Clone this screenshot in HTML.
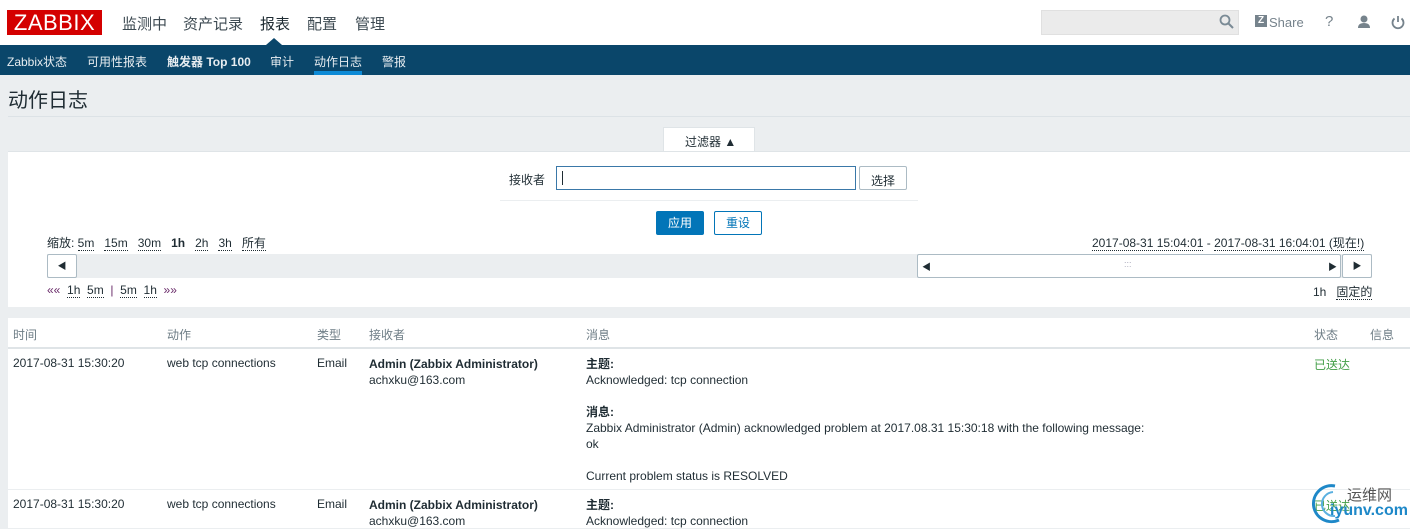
<!DOCTYPE html>
<html><head><meta charset="utf-8"><style>
*{margin:0;padding:0;box-sizing:border-box}
body{width:1410px;height:528px;overflow:hidden;background:#ebeef0;font-family:"Liberation Sans","Noto Sans CJK SC",sans-serif;font-size:12px;color:#1f2c33;position:relative}
.a{position:absolute;white-space:nowrap}
.u{border-bottom:1px dotted #1f2c33}
.top{position:absolute;left:0;top:0;width:1410px;height:45px;background:#fff}
.nav{position:absolute;left:0;top:45px;width:1410px;height:30px;background:#0a466a}
.nav span{position:absolute;top:8px;color:#fff;font-size:12px;opacity:.9}
.m{font-size:15px;color:#3d4a52;top:13px}
.btn{position:absolute;border:1px solid #acbbc4;background:#fff;border-radius:2px}
</style></head><body>
<div class="top"></div>
<div class="a" style="left:7px;top:10px;width:95px;height:25px;background:#d40000;color:#fff;font-size:22px;line-height:25px;text-align:center;letter-spacing:0.5px">ZABBIX</div>
<div class="a m" style="left:122px">监测中</div>
<div class="a m" style="left:183px">资产记录</div>
<div class="a m" style="left:260px;color:#1f2c33">报表</div>
<div class="a m" style="left:307px">配置</div>
<div class="a m" style="left:355px">管理</div>
<div class="a" style="left:266px;top:38px;width:0;height:0;border-left:8px solid transparent;border-right:8px solid transparent;border-bottom:7px solid #0a466a"></div>
<div class="a" style="left:1041px;top:10px;width:198px;height:25px;background:#ebebeb;border:1px solid #e0e0e0"></div>
<svg class="a" style="left:1219px;top:14px" width="16" height="16"><circle cx="6" cy="6" r="4.5" fill="none" stroke="#7a8a95" stroke-width="1.8"/><path d="M9.5 9.5L14 14" stroke="#7a8a95" stroke-width="2"/></svg>
<div class="a" style="left:1255px;top:15px;width:12px;height:12px;background:#76838c;color:#fff;font-size:10px;font-weight:bold;line-height:12px;text-align:center">Z</div>
<div class="a" style="left:1269px;top:15px;color:#76838c;font-size:13px">Share</div>
<div class="a" style="left:1325px;top:13px;color:#76838c;font-size:15px">?</div>
<svg class="a" style="left:1356px;top:14px" width="16" height="16"><circle cx="8" cy="5" r="3.5" fill="#76838c"/><path d="M2 14Q2 9 8 9Q14 9 14 14Z" fill="#76838c"/></svg>
<svg class="a" style="left:1390px;top:14px" width="16" height="16"><path d="M4.5 4.5A5.5 5.5 0 1 0 11.5 4.5" fill="none" stroke="#76838c" stroke-width="1.8"/><path d="M8 2V8" stroke="#76838c" stroke-width="1.8"/></svg>
<div class="nav">
<span style="left:7px">Zabbix状态</span><span style="left:87px">可用性报表</span><span style="left:167px;font-weight:bold">触发器 Top 100</span><span style="left:270px">审计</span><span style="left:314px">动作日志</span><span style="left:382px">警报</span>
<div class="a" style="left:314px;top:26px;width:48px;height:4px;background:#0d8ad6"></div>
</div>
<div class="a" style="left:8px;top:84px;font-size:20px;color:#1f2c33">动作日志</div>
<div class="a" style="left:8px;top:116px;width:1402px;height:1px;background:#dce2e6"></div>
<div class="a" style="left:663px;top:127px;width:92px;height:25px;background:#fff;border:1px solid #dfe4e7;border-bottom:none"></div>
<div class="a" style="left:685px;top:133px">过滤器 ▲</div>
<div class="a" style="left:8px;top:151px;width:1402px;height:156px;background:#fff;border-top:1px solid #dfe4e7"></div>
<div class="a" style="left:509px;top:171px">接收者</div>
<div class="a" style="left:556px;top:166px;width:300px;height:24px;border:1px solid #3a78a8"></div>
<div class="a" style="left:562px;top:171px;width:1px;height:14px;background:#1f2c33"></div>
<div class="btn" style="left:859px;top:166px;width:48px;height:24px"></div>
<div class="a" style="left:871px;top:172px">选择</div>
<div class="a" style="left:500px;top:200px;width:418px;height:1px;background:#ebeef0"></div>
<div class="a" style="left:656px;top:211px;width:48px;height:24px;background:#0275b8;border-radius:2px;color:#fff;text-align:center;line-height:24px">应用</div>
<div class="a" style="left:714px;top:211px;width:48px;height:24px;border:1px solid #0275b8;border-radius:2px;color:#0275b8;text-align:center;line-height:22px">重设</div>
<div class="a" style="left:47px;top:234px">缩放: <span class="u">5m</span>&nbsp;&nbsp; <span class="u">15m</span>&nbsp;&nbsp; <span class="u">30m</span>&nbsp;&nbsp; <b>1h</b>&nbsp;&nbsp; <span class="u">2h</span>&nbsp;&nbsp; <span class="u">3h</span>&nbsp;&nbsp; <span class="u">所有</span></div>
<div class="a" style="left:1092px;top:234px"><span class="u">2017-08-31 15:04:01</span> - <span class="u">2017-08-31 16:04:01 (现在!)</span></div>
<div class="a" style="left:47px;top:254px;width:1325px;height:24px;background:#ebeef0"></div>
<div class="btn" style="left:47px;top:254px;width:30px;height:24px;text-align:center;line-height:22px;font-size:9px">◀</div>
<div class="btn" style="left:917px;top:254px;width:424px;height:24px"></div>
<div class="a" style="left:922px;top:260px;font-size:9px">◀</div>
<div class="a" style="left:1124px;top:259px;font-size:9px;color:#aab">:::</div>
<div class="a" style="left:1328px;top:260px;font-size:9px">▶</div>
<div class="btn" style="left:1342px;top:254px;width:30px;height:24px;text-align:center;line-height:22px;font-size:9px">▶</div>
<div class="a" style="left:47px;top:283px;color:#6a2c6a">«« &nbsp;<span class="u" style="color:#1f2c33">1h</span>&nbsp; <span class="u" style="color:#1f2c33">5m</span>&nbsp; | &nbsp;<span class="u" style="color:#1f2c33">5m</span>&nbsp; <span class="u" style="color:#1f2c33">1h</span>&nbsp; »»</div>
<div class="a" style="left:1313px;top:283px">1h&nbsp;&nbsp; <span class="u">固定的</span></div>
<div class="a" style="left:8px;top:318px;width:1402px;height:210px;background:#fff"></div>
<div class="a" style="left:8px;top:347px;width:1402px;height:2px;background:#dfe4e7"></div>
<div class="a" style="left:8px;top:489px;width:1402px;height:1px;background:#ebeef0"></div>
<div style="color:#6e7d86">
<div class="a" style="left:13px;top:326px">时间</div><div class="a" style="left:167px;top:326px">动作</div><div class="a" style="left:317px;top:326px">类型</div><div class="a" style="left:369px;top:326px">接收者</div><div class="a" style="left:586px;top:326px">消息</div><div class="a" style="left:1314px;top:326px">状态</div><div class="a" style="left:1370px;top:326px">信息</div>
</div>
<div class="a" style="left:13px;top:356px">2017-08-31 15:30:20</div>
<div class="a" style="left:167px;top:356px">web tcp connections</div>
<div class="a" style="left:317px;top:356px">Email</div>
<div class="a" style="left:369px;top:356px;line-height:16px"><b>Admin (Zabbix Administrator)</b><br>achxku@163.com</div>
<div class="a" style="left:586px;top:356px;line-height:16px"><b>主题:</b><br>Acknowledged: tcp connection<br><br><b>消息:</b><br>Zabbix Administrator (Admin) acknowledged problem at 2017.08.31 15:30:18 with the following message:<br>ok<br><br>Current problem status is RESOLVED</div>
<div class="a" style="left:1314px;top:356px;color:#429e47">已送达</div>
<div class="a" style="left:13px;top:497px">2017-08-31 15:30:20</div>
<div class="a" style="left:167px;top:497px">web tcp connections</div>
<div class="a" style="left:317px;top:497px">Email</div>
<div class="a" style="left:369px;top:497px;line-height:16px"><b>Admin (Zabbix Administrator)</b><br>achxku@163.com</div>
<div class="a" style="left:586px;top:497px;line-height:16px"><b>主题:</b><br>Acknowledged: tcp connection</div>
<div class="a" style="left:1314px;top:497px;color:#429e47">已送达</div>
<svg class="a" style="left:1305px;top:480px" width="40" height="45"><path d="M30 6A18 18 0 1 0 34 40" fill="none" stroke="#1e88c8" stroke-width="3"/><path d="M28 12A12 12 0 1 0 30 36" fill="none" stroke="#5ab0e0" stroke-width="2"/></svg>
<div class="a" style="left:1347px;top:484px;font-size:15px;color:#555">运维网</div>
<div class="a" style="left:1330px;top:502px;font-size:16px;font-weight:bold;color:#1e88c8">iyunv.com</div>
</body></html>
